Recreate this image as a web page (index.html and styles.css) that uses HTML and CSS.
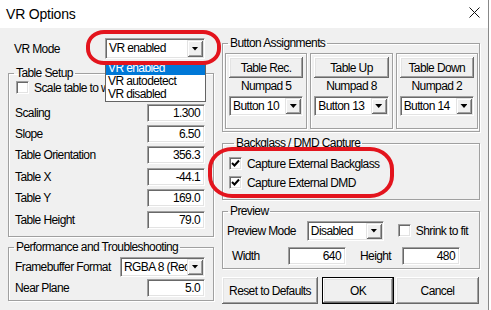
FILE: index.html
```html
<!DOCTYPE html>
<html lang="en">
<head>
    <meta charset="UTF-8">
    <title>VR Options</title>
    <link rel="stylesheet" href="styles.css">
</head>
<body>
<div class="window">
    <div class="titlebar">
        <span class="title">VR Options</span>
        <svg class="close" width="11" height="11" viewBox="0 0 11 11">
            <path d="M0.5 0.5 L10.5 10.5 M10.5 0.5 L0.5 10.5" stroke="#111" stroke-width="1" fill="none"/>
        </svg>
    </div>

    <div class="client">
        <!-- left column -->
        <div class="col col-left">
            <div class="row vr-row">
                <span class="lbl">VR Mode</span>
                <div class="combo combo-vr"><span class="combo-text">VR enabled</span><span class="combo-btn"><i class="arrow"></i></span></div>
            </div>

            <fieldset class="group table-setup">
                <legend>Table Setup</legend>
                <label class="checkrow scale-row"><span class="check"></span><span>Scale table to window</span></label>
                <div class="vals">
                    <div class="row val-row"><span class="lbl">Scaling</span><span class="field">1.300</span></div>
                    <div class="row val-row"><span class="lbl">Slope</span><span class="field">6.50</span></div>
                    <div class="row val-row"><span class="lbl">Table Orientation</span><span class="field">356.3</span></div>
                    <div class="row val-row"><span class="lbl">Table X</span><span class="field">-44.1</span></div>
                    <div class="row val-row"><span class="lbl">Table Y</span><span class="field">169.0</span></div>
                    <div class="row val-row"><span class="lbl">Table Height</span><span class="field">79.0</span></div>
                </div>
            </fieldset>

            <fieldset class="group perf">
                <legend>Performance and Troubleshooting</legend>
                <div class="row perf-row">
                    <span class="lbl">Framebuffer Format</span>
                    <div class="combo combo-fb"><span class="combo-text">RGBA 8 (Recommended)</span><span class="combo-btn"><i class="arrow"></i></span></div>
                </div>
                <div class="row perf-row">
                    <span class="lbl">Near Plane</span>
                    <span class="field">5.0</span>
                </div>
            </fieldset>
        </div>

        <!-- right column -->
        <div class="col col-right">
            <fieldset class="group buttons-group">
                <legend>Button Assignments</legend>
                <div class="panels">
                    <div class="panel">
                        <div class="btn">Table Rec.</div>
                        <div class="numpad">Numpad 5</div>
                        <div class="combo combo-btnmap"><span class="combo-text">Button 10</span><span class="combo-btn"><i class="arrow"></i></span></div>
                    </div>
                    <div class="panel">
                        <div class="btn">Table Up</div>
                        <div class="numpad">Numpad 8</div>
                        <div class="combo combo-btnmap"><span class="combo-text">Button 13</span><span class="combo-btn"><i class="arrow"></i></span></div>
                    </div>
                    <div class="panel">
                        <div class="btn">Table Down</div>
                        <div class="numpad">Numpad 2</div>
                        <div class="combo combo-btnmap"><span class="combo-text">Button 14</span><span class="combo-btn"><i class="arrow"></i></span></div>
                    </div>
                </div>
            </fieldset>

            <fieldset class="group capture">
                <legend>Backglass / DMD Capture</legend>
                <label class="checkrow cap-row"><span class="check checked"><svg width="9" height="9" viewBox="0 0 9 9"><path d="M1 4 L3.5 6.5 L8 1.5" stroke="#000" stroke-width="2" fill="none"/></svg></span><span>Capture External Backglass</span></label>
                <label class="checkrow cap-row"><span class="check checked"><svg width="9" height="9" viewBox="0 0 9 9"><path d="M1 4 L3.5 6.5 L8 1.5" stroke="#000" stroke-width="2" fill="none"/></svg></span><span>Capture External DMD</span></label>
            </fieldset>

            <fieldset class="group preview">
                <legend>Preview</legend>
                <div class="row prev-row1">
                    <span class="lbl">Preview Mode</span>
                    <div class="combo combo-prev"><span class="combo-text">Disabled</span><span class="combo-btn"><i class="arrow"></i></span></div>
                    <label class="checkrow shrink"><span class="check"></span><span>Shrink to fit</span></label>
                </div>
                <div class="row prev-row2">
                    <span class="lbl w-lbl">Width</span>
                    <span class="field">640</span>
                    <span class="lbl h-lbl">Height</span>
                    <span class="field">480</span>
                </div>
            </fieldset>

            <div class="actions">
                <div class="btn btn-reset">Reset to Defaults</div>
                <div class="btn btn-ok">OK</div>
                <div class="btn btn-cancel">Cancel</div>
            </div>
        </div>
    </div>

    <!-- open dropdown of VR Mode -->
    <ul class="droplist">
        <li class="sel">VR enabled</li>
        <li>VR autodetect</li>
        <li>VR disabled</li>
    </ul>

    <!-- red highlight marks -->
    <div class="mark mark-vr"></div>
    <div class="mark mark-capture"></div>
</div>
</body>
</html>
```

FILE: styles.css
```css
* {
    box-sizing: border-box;
}

body {
    margin: 0;
    background: #fff;
    color: #000;
    font: 12px "Liberation Sans", Arial, sans-serif;
    letter-spacing: -0.6px;
}

.window {
    position: relative;
    width: 489px;
    height: 310px;
    border-right: 1px solid #888;
    overflow: hidden;
}

.titlebar {
    height: 28px;
    background: #fff;
    display: flex;
    align-items: center;
    justify-content: space-between;
    padding: 0 8px 0 6px;
}

.title {
    font: 14px "Liberation Sans", Arial, sans-serif;
    letter-spacing: -0.2px;
}

.close {
    display: block;
    margin-top: -3px;
}

.client {
    height: 282px;
    background: #f0f0f0;
    display: flex;
    gap: 8px;
    padding-left: 8px;
}

.col-left {
    width: 206px;
}

.col-right {
    width: 258px;
}

.row {
    display: flex;
    align-items: center;
    white-space: nowrap;
}

/* group boxes */
.group {
    margin: 0;
    padding: 0;
    min-width: 0;
    border: 1px solid #a0a0a0;
    box-shadow: inset 1px 1px 0 #fff, 1px 1px 0 #fff;
}

.group legend {
    margin-left: 5px;
    padding: 0 2px;
    line-height: 14px;
    white-space: nowrap;
}

/* controls */
.field {
    display: block;
    width: 58px;
    height: 18px;
    background: #fff;
    border: 1px solid;
    border-color: #a0a0a0 #fff #fff #a0a0a0;
    box-shadow: inset 1px 1px 0 #696969, inset -1px -1px 0 #e3e3e3;
    text-align: right;
    padding: 0 4px 0 0;
    line-height: 16px;
}

.combo {
    display: flex;
    height: 20px;
    background: #fff;
    border: 1px solid;
    border-color: #a0a0a0 #fff #fff #a0a0a0;
    box-shadow: inset 1px 1px 0 #696969, inset -1px -1px 0 #e3e3e3;
    padding: 1px;
}

.combo-text {
    flex: 1;
    min-width: 0;
    overflow: hidden;
    white-space: nowrap;
    padding-left: 2px;
    line-height: 16px;
}

.combo-btn {
    width: 16px;
    flex: none;
    display: flex;
    align-items: center;
    justify-content: center;
    background: #f0f0f0;
    box-shadow: inset 1px 1px 0 #e3e3e3, inset -1px -1px 0 #696969, inset 2px 2px 0 #fff, inset -2px -2px 0 #a0a0a0;
}

.arrow {
    display: block;
    width: 7px;
    height: 4px;
    background: #000;
    clip-path: polygon(0 0, 100% 0, 50% 100%);
}

.check {
    display: flex;
    align-items: center;
    justify-content: center;
    width: 13px;
    height: 13px;
    flex: none;
    background: #fff;
    border: 1px solid;
    border-color: #a0a0a0 #fff #fff #a0a0a0;
    box-shadow: inset 1px 1px 0 #696969, inset -1px -1px 0 #e3e3e3;
}

.check svg {
    display: block;
}

.checkrow {
    display: flex;
    align-items: center;
    gap: 5px;
    white-space: nowrap;
}

.btn {
    display: flex;
    align-items: center;
    justify-content: center;
    height: 21px;
    background: #f0f0f0;
    box-shadow: inset -1px -1px 0 #696969, inset 1px 1px 0 #fff, inset -2px -2px 0 #a0a0a0, inset 2px 2px 0 #e3e3e3;
    white-space: nowrap;
}

/* left column */
.vr-row {
    margin-top: 10px;
    height: 21px;
    padding-left: 6px;
}

.combo-vr {
    width: 100px;
    height: 21px;
    margin-left: auto;
    margin-right: 9px;
}

.table-setup {
    margin-top: 7px;
    height: 171px;
}

.scale-row {
    margin: 1px 0 0 7px;
    height: 13px;
}

.vals {
    margin-top: 8px;
}

.val-row {
    height: 21.4px;
    padding: 0 8px 0 6px;
    justify-content: space-between;
}

.perf {
    margin-top: 3px;
    height: 61px;
}

.perf-row {
    height: 21px;
    padding: 0 8px 0 6px;
    justify-content: space-between;
}

.perf-row:first-of-type {
    margin-top: 2px;
}

.combo-fb {
    width: 85px;
}

/* right column */
.buttons-group {
    margin-top: 8px;
    height: 96px;
}

.panels {
    display: flex;
    gap: 3px;
    padding: 3px 1px 0 2px;
}

.panel {
    flex: 1;
    height: 76px;
    border: 1px solid #a0a0a0;
    box-shadow: inset 1px 1px 0 #fff, 1px 1px 0 #fff;
    padding: 3px 3px 0;
}

.numpad {
    text-align: center;
    line-height: 14px;
    margin: 1px 0 3px;
}

.combo-btnmap {
    height: 20px;
}

.capture {
    margin-top: 4px;
    height: 64px;
    padding: 4px 0 0 6px;
}

.cap-row {
    height: 19px;
}

.preview {
    margin-top: 4px;
    height: 65px;
}

.prev-row1 {
    margin-top: 2px;
    height: 21px;
    padding-left: 4px;
}

.combo-prev {
    width: 77px;
    height: 20px;
    margin-left: 11px;
}

.shrink {
    margin-left: 14px;
}

.prev-row2 {
    margin-top: 5px;
    height: 19px;
    padding-left: 9px;
}

.w-lbl {
    width: 56px;
}

.h-lbl {
    width: 56px;
    padding-left: 14px;
}

.actions {
    display: flex;
    margin-top: 8px;
}

.btn-reset {
    width: 96px;
    height: 27px;
}

.btn-ok {
    width: 72px;
    height: 27px;
    margin-left: 4px;
    border: 1px solid #000;
}

.btn-cancel {
    width: 83px;
    height: 27px;
    margin-left: 2px;
}

/* overlays */
.droplist {
    position: absolute;
    left: 105px;
    top: 61px;
    width: 101px;
    margin: 0;
    padding: 0;
    list-style: none;
    background: #fff;
    border: 1px solid #646464;
}

.droplist li {
    height: 13px;
    line-height: 13px;
    padding-left: 2px;
}

.droplist .sel {
    background: #0078d7;
    color: #fff;
}

.mark {
    position: absolute;
    border: 4px solid #e3141d;
}

.mark-vr {
    left: 86px;
    top: 30px;
    width: 135px;
    height: 35px;
    border-radius: 18px / 16px;
}

.mark-capture {
    left: 208px;
    top: 147px;
    width: 186px;
    height: 51px;
    border-radius: 24px / 22px;
}
```
